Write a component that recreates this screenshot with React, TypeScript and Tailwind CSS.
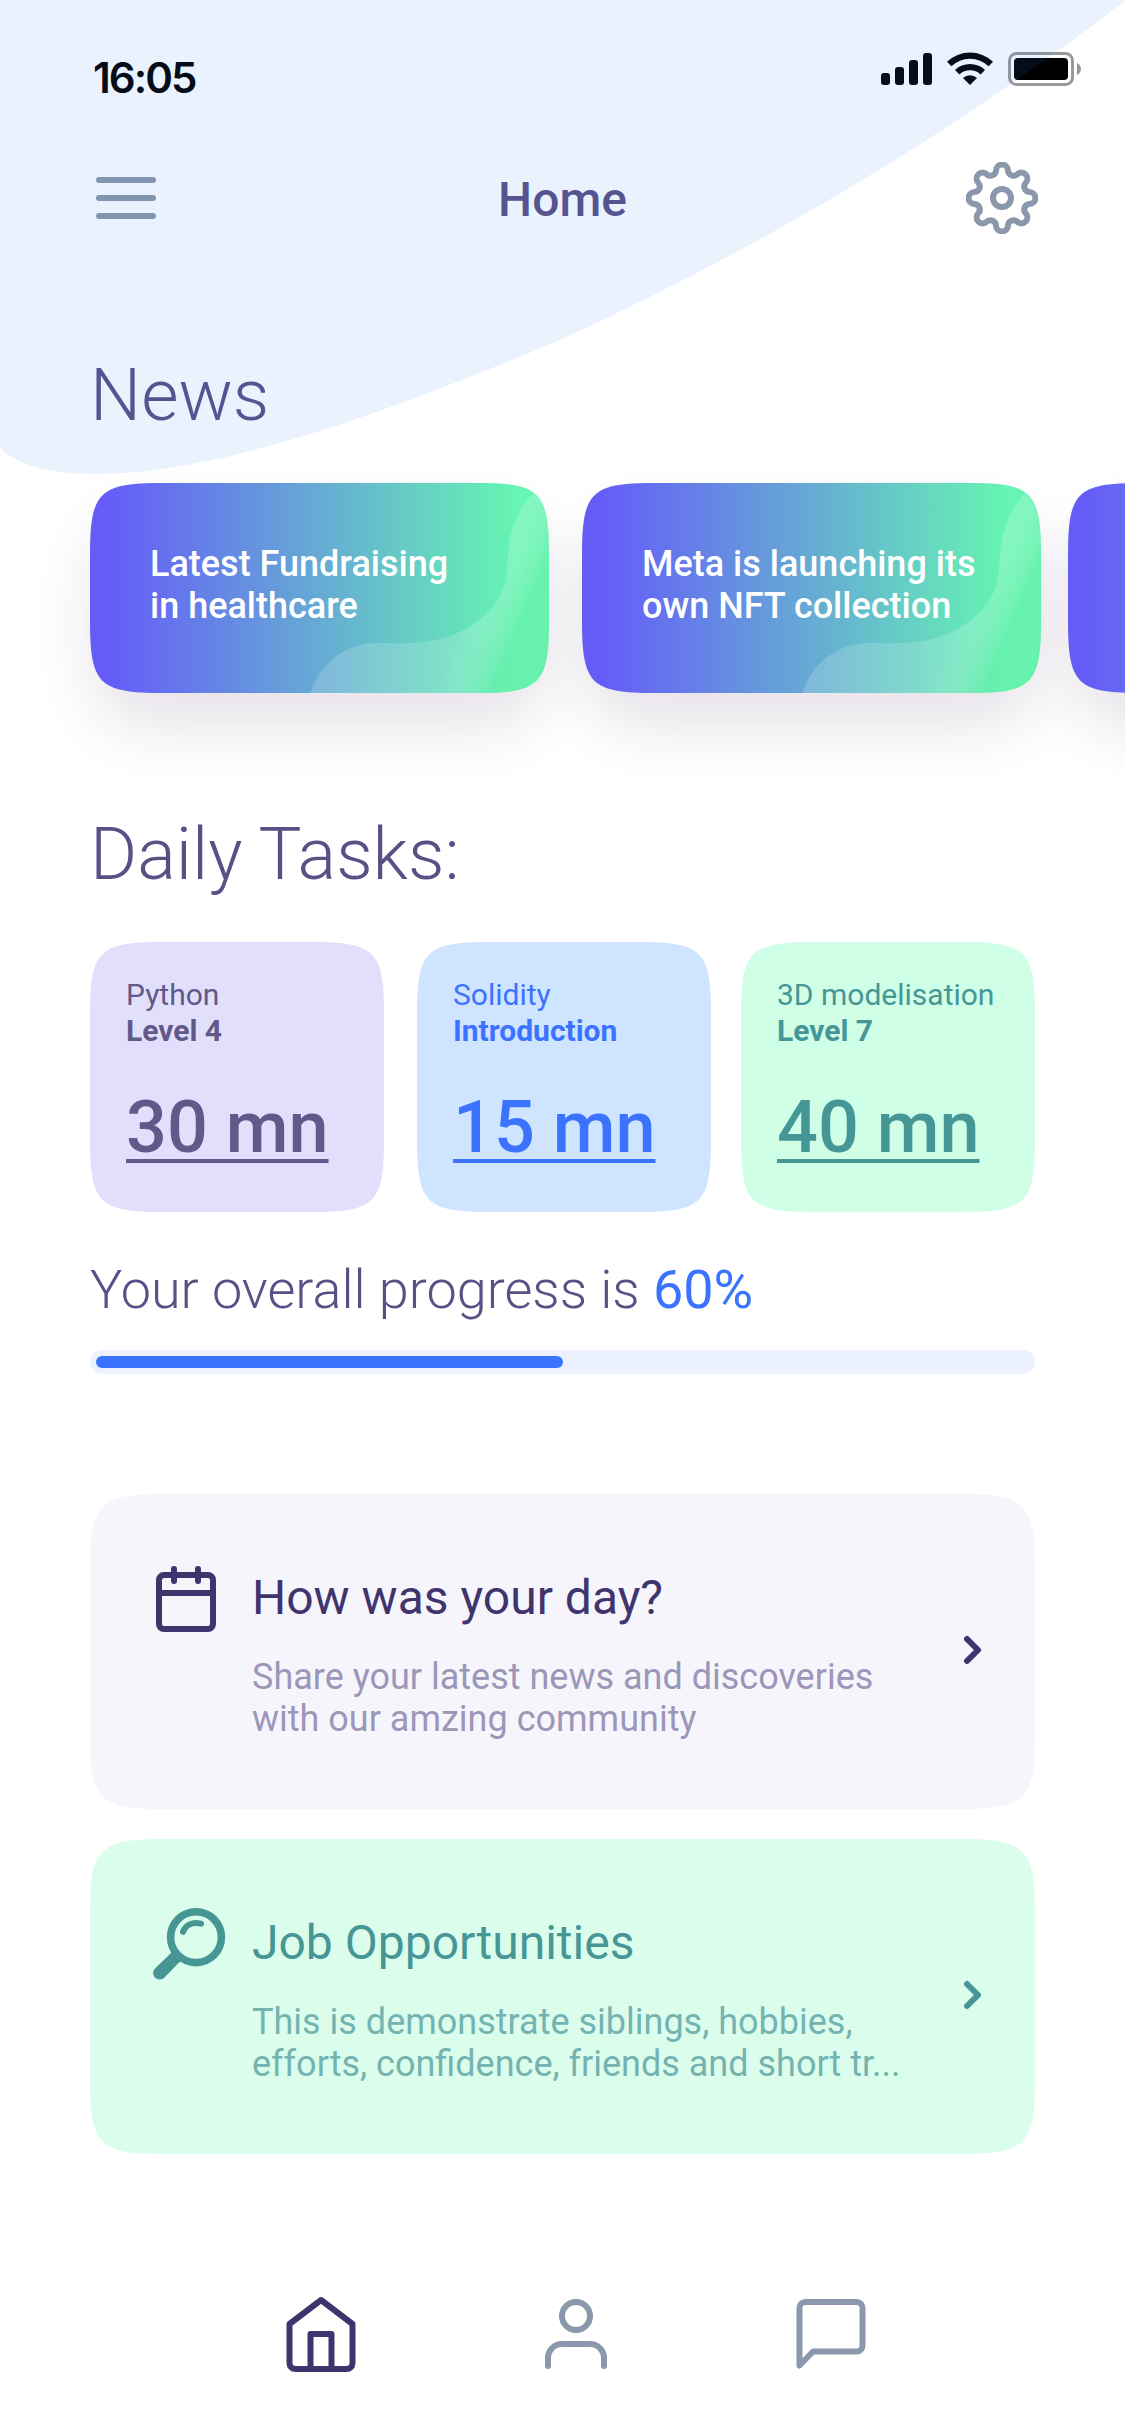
import React from 'react';

const INK = '#5A5086';

/* Eight-lobed gear outline: convex lobes joined by concave valleys. */
function gearPath(): string {
  const r = 28.05;
  const point = (deg: number) => {
    const a = (deg * Math.PI) / 180;
    return `${(36 + r * Math.sin(a)).toFixed(2)} ${(36 - r * Math.cos(a)).toFixed(2)}`;
  };
  let d = `M${point(-12.35)}`;
  for (let k = 0; k < 8; k++) {
    d += `A6 6 0 0 1 ${point(k * 45 + 12.35)}A5.5 5.5 0 0 0 ${point(k * 45 + 32.65)}`;
  }
  return d + 'Z';
}

function StatusBar() {
  return (
    <div className="flex h-[120px] items-start justify-between pl-[93px] pr-[44px]">
      <span className="mt-[52px] font-['Inter'] text-[42px] font-semibold leading-[52px] tracking-[-1.9px] text-black">
        16:05
      </span>
      <svg className="mt-[52px]" width="200" height="34" viewBox="0 0 200 34" fill="#000">
        <rect x="0" y="21" width="9" height="12" rx="3" />
        <rect x="14" y="15" width="9" height="18" rx="3" />
        <rect x="28" y="8" width="9" height="25" rx="3" />
        <rect x="42" y="1" width="9" height="32" rx="3" />
        <path d="M66 9.7A33.5 33.5 0 0 1 112 9.7L107.6 14.3A27 27 0 0 0 70.4 14.3Z" />
        <path d="M74 17.9A22 22 0 0 1 104 17.9L99.6 22.4A15.6 15.6 0 0 0 78.4 22.4Z" />
        <path d="M82 26A10.5 10.5 0 0 1 96 26L89 33Z" />
        <rect x="128.5" y="1.5" width="63" height="31" rx="7" fill="none" stroke="#000" strokeOpacity="0.4" strokeWidth="3" />
        <rect x="133" y="6" width="54" height="22" rx="4" />
        <path d="M196 11C198.6 12 200 14.5 200 17S198.6 22 196 23Z" fillOpacity="0.4" />
      </svg>
    </div>
  );
}

function Header() {
  return (
    <header className="grid h-[156px] grid-cols-3 items-center px-[87px]">
      <svg className="ml-[9px]" width="60" height="42" viewBox="0 0 60 42" fill="#8B98AA">
        <rect width="60" height="6" rx="3" />
        <rect y="18" width="60" height="6" rx="3" />
        <rect y="36" width="60" height="6" rx="3" />
      </svg>
      <h1 className="pt-[3px] text-center text-[48px] font-medium leading-[56px] text-[#5A5086]">Home</h1>
      <svg
        className="justify-self-end"
        width="72"
        height="72"
        viewBox="0 0 72 72"
        fill="none"
        stroke="#8B97AA"
        strokeWidth="6"
        strokeLinejoin="round"
      >
        <path d={gearPath()} />
        <circle cx="36" cy="36" r="9" />
      </svg>
    </header>
  );
}

function NewsCard({ id, lines, className = '' }: { id: string; lines: string[]; className?: string }) {
  return (
    <article className={`w-[459px] shrink-0 rounded-[60px] shadow-[0_36px_60px_rgba(44,0,64,0.11)] ${className}`}>
      <div className="relative h-[210px] bg-[linear-gradient(90deg,#655cf8_4%,#66f5b2_93%)] pl-[60px] pt-[60px] [clip-path:path('M0_72C0_9_9_0_72_0H387C450_0_459_9_459_72V138C459_201_450_210_387_210H72C9_210_0_201_0_138Z')]">
        <svg className="absolute inset-0" width="459" height="210" viewBox="0 0 459 210">
          <defs>
            <linearGradient id={id} gradientUnits="userSpaceOnUse" x1="366" y1="160" x2="414" y2="181">
              <stop offset="0" stopColor="#fff" stopOpacity="0.17" />
              <stop offset="1" stopColor="#67eea8" stopOpacity="0.5" />
            </linearGradient>
          </defs>
          <path
            d="M220.5 210C231 178 258 159 290 160C345 163 373 152 396 131C428 101 411 73 424 42C428 30 434 18 442 12L459 0V210Z"
            fill={`url(#${id})`}
          />
        </svg>
        <p className="relative text-[36px] font-medium leading-[42px] text-white">
          {lines.map((line) => (
            <span key={line} className="block whitespace-nowrap">
              {line}
            </span>
          ))}
        </p>
      </div>
    </article>
  );
}

function TaskCard({ name, level, time, className }: { name: string; level: string; time: string; className: string }) {
  return (
    <article
      className={`h-[270px] w-[294px] shrink-0 pl-[36px] pt-[35px] [clip-path:path('M0_72C0_9_9_0_72_0H222C285_0_294_9_294_72V198C294_261_285_270_222_270H72C9_270_0_261_0_198Z')] ${className}`}
    >
      <p className="whitespace-nowrap text-[30px] leading-[36px]">{name}</p>
      <p className="text-[30px] font-bold leading-[36px]">{level}</p>
      <p className="mt-[37px] text-[72px] font-medium leading-[84px] underline decoration-[3.5px] underline-offset-[7px]">
        {time}
      </p>
    </article>
  );
}

function LinkCard({
  icon,
  title,
  lines,
  className,
  descClass,
}: {
  icon: React.ReactNode;
  title: string;
  lines: string[];
  className: string;
  descClass: string;
}) {
  return (
    <article
      className={`flex h-[315px] w-[945px] pl-[60px] pr-[51px] [clip-path:path('M0_72C0_10_10_0_72_0H873C935_0_945_10_945_72V243C945_305_935_315_873_315H72C10_315_0_305_0_243Z')] ${className}`}
    >
      <div className="mt-[69px]">{icon}</div>
      <div className="ml-[30px] mt-[76px]">
        <h3 className="text-[48px] leading-[56px]">{title}</h3>
        <p className={`mt-[30px] text-[36px] leading-[42px] ${descClass}`}>
          {lines.map((line) => (
            <span key={line} className="block whitespace-nowrap">
              {line}
            </span>
          ))}
        </p>
      </div>
      <svg
        className="ml-auto mt-[140px]"
        width="20"
        height="32"
        viewBox="0 0 20 32"
        fill="none"
        stroke="currentColor"
        strokeWidth="6"
        strokeLinecap="round"
        strokeLinejoin="round"
      >
        <path d="M3 5L14 16L3 27" />
      </svg>
    </article>
  );
}

function CalendarIcon() {
  return (
    <svg width="72" height="72" viewBox="0 0 72 72" fill="none" stroke="currentColor" strokeWidth="6" strokeLinecap="round">
      <rect x="9" y="12" width="54" height="54" rx="5" />
      <path d="M9 30H63M24 6V18M48 6V18" />
    </svg>
  );
}

function MagnifierIcon() {
  return (
    <svg className="overflow-visible" width="72" height="72" viewBox="0 0 72 72" fill="none" stroke="currentColor" strokeLinecap="round">
      <circle cx="46" cy="29.2" r="25.4" strokeWidth="7.6" />
      <path d="M33 23.8C35.5 17.3 42 13.5 51 15.7" strokeWidth="6" />
      <path
        d="M20.5 45.5L5 60.5C-0.5 66.5 7.5 75.5 14.5 69.5L29 54.5L31 53.3L22 43.5Z"
        fill="currentColor"
        stroke="none"
      />
    </svg>
  );
}

function BottomNav() {
  return (
    <nav className="mt-[138px] flex pl-[285px] text-[#8B97AA]">
      <svg className="text-[#40346F]" width="72" height="84" viewBox="0 0 72 84" fill="none" stroke="currentColor" strokeWidth="6" strokeLinejoin="round">
        <path d="M36 8L67.5 32V71C67.5 74.5 65 77 61.5 77H10.5C7 77 4.5 74.5 4.5 71V32Z" />
        <path d="M25.5 77V42H46.5V77" />
      </svg>
      <svg className="ml-[183px]" width="72" height="84" viewBox="0 0 72 84" fill="none" stroke="currentColor" strokeWidth="6" strokeLinecap="round">
        <circle cx="36" cy="24" r="14" />
        <path d="M8 74V66A14 14 0 0 1 22 52H50A14 14 0 0 1 64 66V74" />
      </svg>
      <svg className="ml-[183px]" width="72" height="84" viewBox="0 0 72 84" fill="none" stroke="currentColor" strokeWidth="6" strokeLinejoin="round">
        <path d="M4.5 73.5V16C4.5 12.5 7 10 10.5 10H61.5C65 10 67.5 12.5 67.5 16V53.5C67.5 57 65 59.5 61.5 59.5H18Z" />
      </svg>
    </nav>
  );
}

export default function App() {
  return (
    <main className="relative h-[2436px] w-[1125px] overflow-hidden bg-white font-['Roboto',sans-serif]">
      <StatusBar />
      <Header />

      <section className="pl-[90px]">
        <h2 className="mt-[78px] text-[72px] font-light leading-[84px]" style={{ color: INK }}>
          News
        </h2>
        <div className="mt-[45px] flex">
          <NewsCard id="wave-a" lines={['Latest Fundraising', 'in healthcare']} />
          <NewsCard id="wave-b" className="ml-[33px]" lines={['Meta is launching its', 'own NFT collection']} />
          <NewsCard id="wave-c" className="ml-[27px]" lines={[]} />
        </div>
      </section>

      <section className="relative mt-[120px] px-[90px]">
        <h2 className="text-[72px] font-light leading-[84px]" style={{ color: INK }}>
          Daily Tasks:
        </h2>
        <div className="mt-[45px] flex">
          <TaskCard name="Python" level="Level 4" time="30 mn" className="bg-[#E2DFFC] text-[#61598A]" />
          <TaskCard name="Solidity" level="Introduction" time="15 mn" className="ml-[33px] bg-[#CFE4FF] text-[#3B73FF]" />
          <TaskCard name="3D modelisation" level="Level 7" time="40 mn" className="ml-[30px] bg-[#CFFFE6] text-[#469696]" />
        </div>
        <p className="mt-[46px] text-[54px] font-light leading-[63px]" style={{ color: INK }}>
          Your overall progress is <span className="font-normal text-[#3B73FF]">60%</span>
        </p>
        <div className="mt-[29px] h-[24px] rounded-full bg-[#EBF1FF] p-[6px]">
          <div className="h-[12px] w-1/2 rounded-full bg-[#3B73FF]" />
        </div>
      </section>

      <section className="mt-[120px] flex flex-col gap-[30px] px-[90px]">
        <LinkCard
          icon={<CalendarIcon />}
          title="How was your day?"
          lines={['Share your latest news and discoveries', 'with our amzing community']}
          className="bg-[#F6F5FC] text-[#40346F]"
          descClass="text-[#9C96B8]"
        />
        <LinkCard
          icon={<MagnifierIcon />}
          title="Job Opportunities"
          lines={['This is demonstrate siblings, hobbies,', 'efforts, confidence, friends and short tr...']}
          className="bg-[#DBFEEC] text-[#469696]"
          descClass="text-[#74B3B1]"
        />
      </section>

      <BottomNav />

      {/* Translucent swoosh laid over the top of the screen */}
      <svg className="pointer-events-none absolute left-0 top-0" width="1125" height="480" viewBox="0 0 1125 480">
        <path
          d="M0 0H1125V1C940 143 745 255 560 340C395 410 220 474 96 474C55 474 20 467 0 448Z"
          fill="#2D80FA"
          fillOpacity="0.1"
        />
      </svg>
    </main>
  );
}
